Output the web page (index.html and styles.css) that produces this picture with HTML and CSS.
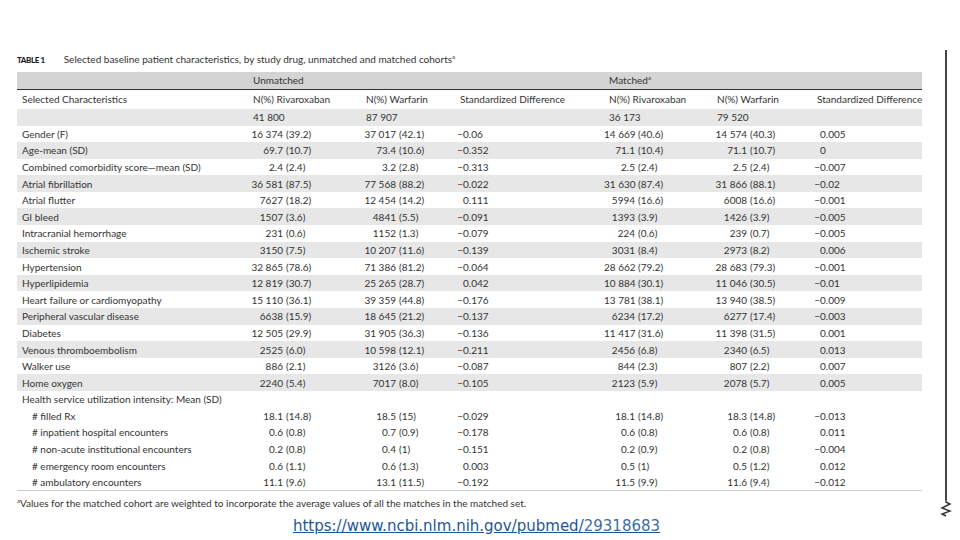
FILE: index.html
```html
<!DOCTYPE html>
<html lang="en">
<head>
<meta charset="utf-8">
<title>Table 1</title>
<link rel="stylesheet" href="styles.css">
</head>
<body>
<div class="page">
  <main class="content">
    <div class="title"><b>TABLE 1</b><span>Selected baseline patient characteristics, by study drug, unmatched and matched cohorts<sup>a</sup></span></div>
    <table class="tbl">
      <colgroup>
        <col class="w0"><col class="w1"><col class="w2"><col class="w3"><col class="w4"><col class="w5"><col class="w6">
      </colgroup>
      <tr class="band"><td></td><td colspan="3">Unmatched</td><td colspan="3">Matched<sup>a</sup></td></tr>
      <tr class="colhead"><td>Selected Characteristics</td><td>N(%) Rivaroxaban</td><td>N(%) Warfarin</td><td>Standardized Difference</td><td>N(%) Rivaroxaban</td><td>N(%) Warfarin</td><td>Standardized Difference</td></tr>
      <tr class="totals s"><td></td><td>41 800</td><td>87 907</td><td></td><td>36 173</td><td>79 520</td><td></td></tr>
      <tr><td>Gender (F)</td><td class="num"><span class="n">16 374</span>(39.2)</td><td class="num"><span class="n">37 017</span>(42.1)</td><td class="sd"><span class="sg">−</span>0.06</td><td class="num c4"><span class="n">14 669</span>(40.6)</td><td class="num"><span class="n">14 574</span>(40.3)</td><td class="sd"><span class="sg"></span>0.005</td></tr>
      <tr class="s"><td>Age-mean (SD)</td><td class="num"><span class="n">69.7</span>(10.7)</td><td class="num"><span class="n">73.4</span>(10.6)</td><td class="sd"><span class="sg">−</span>0.352</td><td class="num c4"><span class="n">71.1</span>(10.4)</td><td class="num"><span class="n">71.1</span>(10.7)</td><td class="sd"><span class="sg"></span>0</td></tr>
      <tr><td>Combined comorbidity score—mean (SD)</td><td class="num"><span class="n">2.4</span>(2.4)</td><td class="num"><span class="n">3.2</span>(2.8)</td><td class="sd"><span class="sg">−</span>0.313</td><td class="num c4"><span class="n">2.5</span>(2.4)</td><td class="num"><span class="n">2.5</span>(2.4)</td><td class="sd"><span class="sg">−</span>0.007</td></tr>
      <tr class="s"><td>Atrial fibrillation</td><td class="num"><span class="n">36 581</span>(87.5)</td><td class="num"><span class="n">77 568</span>(88.2)</td><td class="sd"><span class="sg">−</span>0.022</td><td class="num c4"><span class="n">31 630</span>(87.4)</td><td class="num"><span class="n">31 866</span>(88.1)</td><td class="sd"><span class="sg">−</span>0.02</td></tr>
      <tr><td>Atrial flutter</td><td class="num"><span class="n">7627</span>(18.2)</td><td class="num"><span class="n">12 454</span>(14.2)</td><td class="sd"><span class="sg"></span>0.111</td><td class="num c4"><span class="n">5994</span>(16.6)</td><td class="num"><span class="n">6008</span>(16.6)</td><td class="sd"><span class="sg">−</span>0.001</td></tr>
      <tr class="s"><td>GI bleed</td><td class="num"><span class="n">1507</span>(3.6)</td><td class="num"><span class="n">4841</span>(5.5)</td><td class="sd"><span class="sg">−</span>0.091</td><td class="num c4"><span class="n">1393</span>(3.9)</td><td class="num"><span class="n">1426</span>(3.9)</td><td class="sd"><span class="sg">−</span>0.005</td></tr>
      <tr><td>Intracranial hemorrhage</td><td class="num"><span class="n">231</span>(0.6)</td><td class="num"><span class="n">1152</span>(1.3)</td><td class="sd"><span class="sg">−</span>0.079</td><td class="num c4"><span class="n">224</span>(0.6)</td><td class="num"><span class="n">239</span>(0.7)</td><td class="sd"><span class="sg">−</span>0.005</td></tr>
      <tr class="s"><td>Ischemic stroke</td><td class="num"><span class="n">3150</span>(7.5)</td><td class="num"><span class="n">10 207</span>(11.6)</td><td class="sd"><span class="sg">−</span>0.139</td><td class="num c4"><span class="n">3031</span>(8.4)</td><td class="num"><span class="n">2973</span>(8.2)</td><td class="sd"><span class="sg"></span>0.006</td></tr>
      <tr><td>Hypertension</td><td class="num"><span class="n">32 865</span>(78.6)</td><td class="num"><span class="n">71 386</span>(81.2)</td><td class="sd"><span class="sg">−</span>0.064</td><td class="num c4"><span class="n">28 662</span>(79.2)</td><td class="num"><span class="n">28 683</span>(79.3)</td><td class="sd"><span class="sg">−</span>0.001</td></tr>
      <tr class="s"><td>Hyperlipidemia</td><td class="num"><span class="n">12 819</span>(30.7)</td><td class="num"><span class="n">25 265</span>(28.7)</td><td class="sd"><span class="sg"></span>0.042</td><td class="num c4"><span class="n">10 884</span>(30.1)</td><td class="num"><span class="n">11 046</span>(30.5)</td><td class="sd"><span class="sg">−</span>0.01</td></tr>
      <tr><td>Heart failure or cardiomyopathy</td><td class="num"><span class="n">15 110</span>(36.1)</td><td class="num"><span class="n">39 359</span>(44.8)</td><td class="sd"><span class="sg">−</span>0.176</td><td class="num c4"><span class="n">13 781</span>(38.1)</td><td class="num"><span class="n">13 940</span>(38.5)</td><td class="sd"><span class="sg">−</span>0.009</td></tr>
      <tr class="s"><td>Peripheral vascular disease</td><td class="num"><span class="n">6638</span>(15.9)</td><td class="num"><span class="n">18 645</span>(21.2)</td><td class="sd"><span class="sg">−</span>0.137</td><td class="num c4"><span class="n">6234</span>(17.2)</td><td class="num"><span class="n">6277</span>(17.4)</td><td class="sd"><span class="sg">−</span>0.003</td></tr>
      <tr><td>Diabetes</td><td class="num"><span class="n">12 505</span>(29.9)</td><td class="num"><span class="n">31 905</span>(36.3)</td><td class="sd"><span class="sg">−</span>0.136</td><td class="num c4"><span class="n">11 417</span>(31.6)</td><td class="num"><span class="n">11 398</span>(31.5)</td><td class="sd"><span class="sg"></span>0.001</td></tr>
      <tr class="s"><td>Venous thromboembolism</td><td class="num"><span class="n">2525</span>(6.0)</td><td class="num"><span class="n">10 598</span>(12.1)</td><td class="sd"><span class="sg">−</span>0.211</td><td class="num c4"><span class="n">2456</span>(6.8)</td><td class="num"><span class="n">2340</span>(6.5)</td><td class="sd"><span class="sg"></span>0.013</td></tr>
      <tr><td>Walker use</td><td class="num"><span class="n">886</span>(2.1)</td><td class="num"><span class="n">3126</span>(3.6)</td><td class="sd"><span class="sg">−</span>0.087</td><td class="num c4"><span class="n">844</span>(2.3)</td><td class="num"><span class="n">807</span>(2.2)</td><td class="sd"><span class="sg"></span>0.007</td></tr>
      <tr class="s"><td>Home oxygen</td><td class="num"><span class="n">2240</span>(5.4)</td><td class="num"><span class="n">7017</span>(8.0)</td><td class="sd"><span class="sg">−</span>0.105</td><td class="num c4"><span class="n">2123</span>(5.9)</td><td class="num"><span class="n">2078</span>(5.7)</td><td class="sd"><span class="sg"></span>0.005</td></tr>
      <tr><td>Health service utilization intensity: Mean (SD)</td><td></td><td></td><td></td><td></td><td></td><td></td></tr>
      <tr><td class="sub"># filled Rx</td><td class="num"><span class="n">18.1</span>(14.8)</td><td class="num"><span class="n">18.5</span>(15)</td><td class="sd"><span class="sg">−</span>0.029</td><td class="num c4"><span class="n">18.1</span>(14.8)</td><td class="num"><span class="n">18.3</span>(14.8)</td><td class="sd"><span class="sg">−</span>0.013</td></tr>
      <tr><td class="sub"># inpatient hospital encounters</td><td class="num"><span class="n">0.6</span>(0.8)</td><td class="num"><span class="n">0.7</span>(0.9)</td><td class="sd"><span class="sg">−</span>0.178</td><td class="num c4"><span class="n">0.6</span>(0.8)</td><td class="num"><span class="n">0.6</span>(0.8)</td><td class="sd"><span class="sg"></span>0.011</td></tr>
      <tr><td class="sub"># non-acute institutional encounters</td><td class="num"><span class="n">0.2</span>(0.8)</td><td class="num"><span class="n">0.4</span>(1)</td><td class="sd"><span class="sg">−</span>0.151</td><td class="num c4"><span class="n">0.2</span>(0.9)</td><td class="num"><span class="n">0.2</span>(0.8)</td><td class="sd"><span class="sg">−</span>0.004</td></tr>
      <tr><td class="sub"># emergency room encounters</td><td class="num"><span class="n">0.6</span>(1.1)</td><td class="num"><span class="n">0.6</span>(1.3)</td><td class="sd"><span class="sg"></span>0.003</td><td class="num c4"><span class="n">0.5</span>(1)</td><td class="num"><span class="n">0.5</span>(1.2)</td><td class="sd"><span class="sg"></span>0.012</td></tr>
      <tr class="last"><td class="sub"># ambulatory encounters</td><td class="num"><span class="n">11.1</span>(9.6)</td><td class="num"><span class="n">13.1</span>(11.5)</td><td class="sd"><span class="sg">−</span>0.192</td><td class="num c4"><span class="n">11.5</span>(9.9)</td><td class="num"><span class="n">11.6</span>(9.4)</td><td class="sd"><span class="sg">−</span>0.012</td></tr>
    </table>
    <p class="foot"><sup>a</sup>Values for the matched cohort are weighted to incorporate the average values of all the matches in the matched set.</p>
    <p class="src"><a href="#">https://www.ncbi.nlm.nih.gov/pubmed/<span class="id">29318683</span></a></p>
  </main>
  <aside class="rail">
    <div class="rule"></div>
    <svg class="zig" width="14" height="18" viewBox="0 0 14 18"><polyline points="7,0 7,2 11,4 3,8 11,11 3,14 7,16" fill="none" stroke="#333" stroke-width="1.4"/></svg>
  </aside>
</div>
</body>
</html>
```
FILE: styles.css
```css
html, body {
  margin: 0;
  padding: 0;
  background: #fff;
}
body {
  width: 960px;
  height: 540px;
  overflow: hidden;
  font-family: Lato, "Open Sans", sans-serif;
  color: #333;
}
.page {
  display: flex;
  align-items: flex-start;
}
.content {
  padding-left: 17px;
  width: 905px;
  flex: none;
}
.title {
  margin-top: 53px;
  height: 12px;
  line-height: 12px;
  font-size: 10px;
  display: flex;
  align-items: baseline;
  color: #333;
}
.title b {
  font-size: 8px;
  font-weight: 900;
  letter-spacing: -0.4px;
  margin-right: 19px;
  color: #1e1e1e;
}
sup {
  font-size: 6px;
  line-height: 0;
  vertical-align: 4px;
}
.tbl {
  margin-top: 7px;
  width: 905px;
  border-collapse: collapse;
  table-layout: fixed;
  font-size: 10px;
}
.w0 { width: 231px; }
.w1 { width: 113px; }
.w2 { width: 94px; }
.w3 { width: 149px; }
.w4 { width: 108px; }
.w5 { width: 100px; }
.w6 { width: 110px; }
.tbl td {
  padding: 0 0 0 5px;
  white-space: nowrap;
  vertical-align: middle;
  line-height: 12px;
  overflow: visible;
}
.tbl tr { height: 16.6px; }
.tbl tr.band { height: 17px; }
.tbl tr.band td {
  background: #d4d4d4;
  border-bottom: 1.5px solid #333;
}
.tbl tr.colhead { height: 19.5px; }
.tbl tr.totals { height: 17px; }
.tbl tr.s td { background: #e7e7e7; }
.tbl tr.last td { border-bottom: 1px solid #cfcfcf; }
.tbl td.sub { padding-left: 15px; }
.tbl td.num { padding-left: 0; }
.n {
  display: inline-block;
  width: 38px;
  padding-right: 3px;
  box-sizing: border-box;
  text-align: right;
}
.c4 .n { width: 34px; }
.tbl td.sd { padding-left: 0; }
.sg {
  display: inline-block;
  width: 8px;
  text-align: right;
}
.foot {
  margin: 5.5px 0 0;
  font-size: 10px;
  line-height: 12px;
  color: #333;
}
.src {
  margin: 8px 0 0;
  padding-left: 14px;
  text-align: center;
  font-family: "DejaVu Sans", Verdana, sans-serif;
  font-size: 15px;
  line-height: 18px;
}
.src a {
  color: #1d5796;
  text-decoration: underline;
}
.src .id { color: #3b6ea6; }
.rail {
  margin-left: 17px;
  margin-top: 50px;
  display: flex;
  flex-direction: column;
  align-items: center;
  width: 14px;
}
.rule {
  width: 1.5px;
  height: 450px;
  background: #444;
}
.zig { display: block; }
```
